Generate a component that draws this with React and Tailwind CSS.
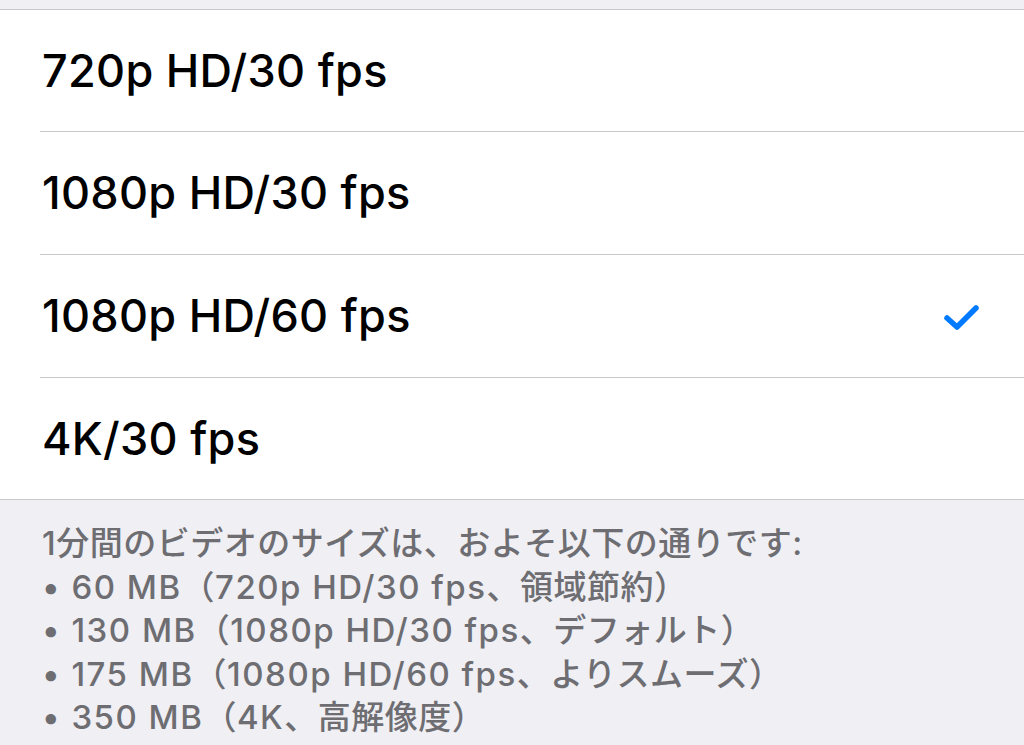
const options = [
  { label: '720p HD/30 fps', checked: false, h: 'h-[122px]' },
  { label: '1080p HD/30 fps', checked: false, h: 'h-[123px]' },
  { label: '1080p HD/60 fps', checked: true, h: 'h-[123px]' },
  { label: '4K/30 fps', checked: false, h: 'h-[121px]' },
];

// [latin, cjk, latin, cjk ...] segments so latin runs can be spaced a bit wider
const notes = [
  ['1', '分間のビデオのサイズは、およそ以下の通りです:'],
  ['• 60 MB', '（', '720p HD/30 fps', '、領域節約）'],
  ['• 130 MB', '（', '1080p HD/30 fps', '、デフォルト）'],
  ['• 175 MB', '（', '1080p HD/60 fps', '、よりスムーズ）'],
  ['• 350 MB', '（', '4K', '、高解像度）'],
];

function Check() {
  return (
    <svg width="40" height="30" viewBox="0 0 40 30" className="mr-[42px]">
      <path
        d="M5 17 L15 26 L34 7"
        fill="none"
        stroke="#007aff"
        strokeWidth="5.5"
        strokeLinecap="round"
        strokeLinejoin="round"
      />
    </svg>
  );
}

export default function App() {
  return (
    <div
      className="w-[1024px] h-[745px] overflow-hidden bg-[#efeff4]"
      style={{ fontFamily: 'Inter, "Noto Sans CJK JP", sans-serif' }}
    >
      <div className="h-[9px]" />
      <div className="bg-white border-t border-b border-[#c8c7cc]">
        {options.map((opt, i) => (
          <div key={opt.label} className="pl-[40px]">
            <div
              className={
                opt.h +
                ' flex items-center justify-between pl-[2px] ' +
                (i < options.length - 1 ? 'border-b border-[#c8c7cc]' : '')
              }
            >
              <span className="text-[45px] font-medium text-black tracking-[0.3px]">{opt.label}</span>
              {opt.checked && <Check />}
            </div>
          </div>
        ))}
      </div>
      <div className="pl-[42px] pt-[22px] text-[33px] font-medium leading-[43.5px] tracking-[0.5px] text-[#6d6d72]">
        {notes.map((segs, i) => (
          <div key={i} className="whitespace-nowrap">
            {segs.map((s, j) => (
              <span key={j} className={j % 2 === 0 && i > 0 ? 'tracking-[1.5px]' : ''}>
                {s}
              </span>
            ))}
          </div>
        ))}
      </div>
    </div>
  );
}
